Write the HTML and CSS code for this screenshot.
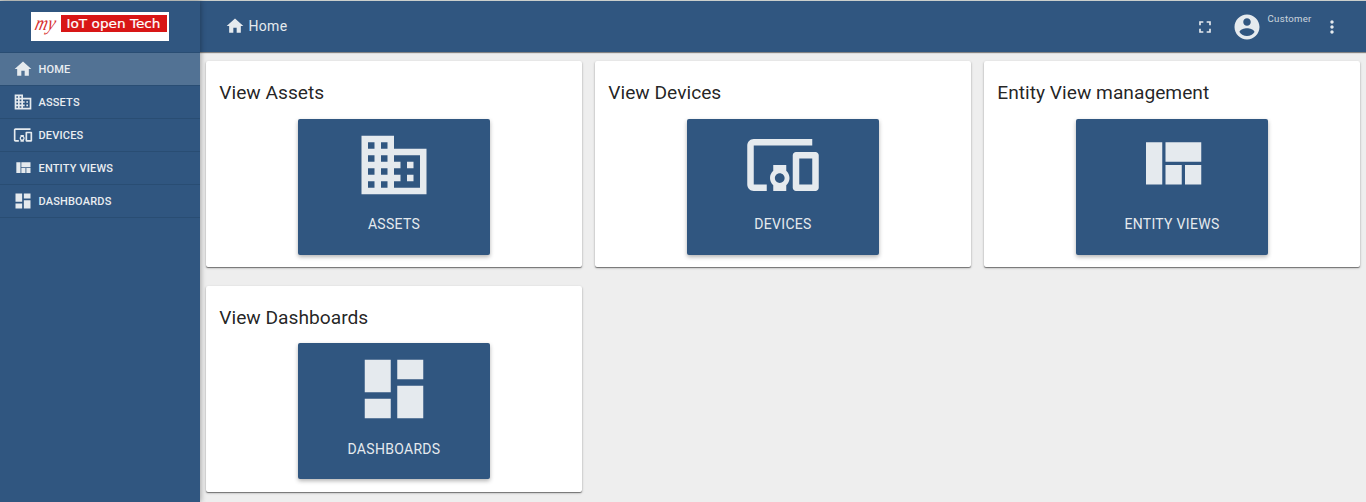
FILE: index.html
```html
<!DOCTYPE html>
<html lang="en">
<head>
<meta charset="utf-8">
<title>Home</title>
<link rel="stylesheet" href="styles.css">
</head>
<body>
<svg class="defs" aria-hidden="true">
  <symbol id="home" viewBox="0 0 24 24"><path d="M10 20v-6h4v6h5v-8h3L12 3 2 12h3v8z"/></symbol>
  <symbol id="assets" viewBox="0 0 24 24"><path d="M12 7V3H2v18h20V7H12zM6 19H4v-2h2v2zm0-4H4v-2h2v2zm0-4H4V9h2v2zm0-4H4V5h2v2zm4 12H8v-2h2v2zm0-4H8v-2h2v2zm0-4H8V9h2v2zm0-4H8V5h2v2zm10 12h-8v-2h2v-2h-2v-2h2v-2h-2V9h8v10zm-2-8h-2v2h2v-2zm0 4h-2v2h2v-2z"/></symbol>
  <symbol id="devices" viewBox="0 0 24 24"><path d="M3 6h18V4H3c-1.1 0-2 .9-2 2v12c0 1.1.9 2 2 2h4v-2H3V6zm10 6H9v1.78c-.61.55-1 1.33-1 2.22s.39 1.67 1 2.22V20h4v-1.78c.61-.55 1-1.34 1-2.22s-.39-1.67-1-2.22V12zm-2 5.5c-.83 0-1.5-.67-1.5-1.5s.67-1.5 1.5-1.5 1.5.67 1.5 1.5-.67 1.5-1.5 1.5zM22 8h-6c-.5 0-1 .5-1 1v10c0 .5.5 1 1 1h6c.5 0 1-.5 1-1V9c0-.5-.5-1-1-1zm-1 10h-4v-8h4v8z"/></symbol>
  <symbol id="views" viewBox="0 0 24 24"><path d="M10 18h5v-6h-5v6zm-6 0h5V5H4v13zm12 0h5v-6h-5v6zM10 5v6h11V5H10z"/></symbol>
  <symbol id="dashboards" viewBox="0 0 24 24"><path d="M3 13h8V3H3v10zm0 8h8v-6H3v6zm10 0h8V11h-8v10zm0-18v6h8V3h-8z"/></symbol>
  <symbol id="fullscreen" viewBox="0 0 24 24"><path d="M7 14H5v5h5v-2H7v-3zm-2-4h2V7h3V5H5v5zm12 7h-3v2h5v-5h-2v3zM14 5v2h3v3h2V5h-5z"/></symbol>
  <symbol id="account" viewBox="0 0 24 24"><path d="M12 2C6.48 2 2 6.48 2 12s4.480 10 10 10 10-4.480 10-10S17.520 2 12 2zm0 3c1.660 0 3 1.340 3 3s-1.340 3-3 3-3-1.340-3-3 1.340-3 3-3zm0 14.200c-2.500 0-4.710-1.280-6-3.220.03-1.990 4-3.080 6-3.080 1.990 0 5.970 1.090 6 3.080-1.290 1.940-3.500 3.220-6 3.220z"/></symbol>
  <symbol id="more" viewBox="0 0 24 24"><path d="M12 8c1.100 0 2-.9 2-2s-.9-2-2-2-2 .9-2 2 .9 2 2 2zm0 2c-1.100 0-2 .9-2 2s.9 2 2 2 2-.9 2-2-.9-2-2-2zm0 6c-1.100 0-2 .9-2 2s.9 2 2 2 2-.9 2-2-.9-2-2-2z"/></symbol>
</svg>
<div class="app">
  <aside class="sidebar">
    <div class="brand">
      <svg class="logo" viewBox="0 0 138 29">
        <rect width="138" height="29" fill="#fff"/>
        <rect x="30" y="3" width="106" height="17" fill="#d81616"/>
        <text class="logo-my" transform="translate(3 18) skewX(-14) scale(1 1.15)" textLength="20" lengthAdjust="spacingAndGlyphs">my</text>
        <text class="logo-name" x="35.500" y="15.500" textLength="94" lengthAdjust="spacingAndGlyphs">IoT open Tech</text>
      </svg>
    </div>
    <nav class="menu">
      <a class="item active"><svg class="icon"><use href="#home"/></svg>Home</a>
      <a class="item"><svg class="icon"><use href="#assets"/></svg>Assets</a>
      <a class="item"><svg class="icon"><use href="#devices"/></svg>Devices</a>
      <a class="item"><svg class="icon"><use href="#views"/></svg>Entity views</a>
      <a class="item"><svg class="icon"><use href="#dashboards"/></svg>Dashboards</a>
    </nav>
  </aside>
  <div class="page">
    <header class="toolbar">
      <div class="crumb"><svg class="icon"><use href="#home"/></svg>Home</div>
      <svg class="icon expand"><use href="#fullscreen"/></svg>
      <svg class="avatar"><use href="#account"/></svg>
      <span class="role">Customer</span>
      <svg class="icon more"><use href="#more"/></svg>
    </header>
    <main class="cards">
      <section class="card"><h2>View Assets</h2><a class="tile"><svg><use href="#assets"/></svg><span>Assets</span></a></section>
      <section class="card"><h2>View Devices</h2><a class="tile"><svg><use href="#devices"/></svg><span>Devices</span></a></section>
      <section class="card"><h2>Entity View management</h2><a class="tile"><svg><use href="#views"/></svg><span>Entity views</span></a></section>
      <section class="card"><h2>View Dashboards</h2><a class="tile"><svg><use href="#dashboards"/></svg><span>Dashboards</span></a></section>
    </main>
  </div>
</div>
</body>
</html>
```
FILE: styles.css
```css
* { box-sizing: border-box; }
body { margin: 0; font-family: Roboto, sans-serif; color: rgba(0, 0, 0, .87); background: #eee; overflow: hidden; }
svg { display: block; flex: none; fill: #e5eaee; }
.defs { display: none; }
.app { display: flex; height: 502px; border-top: 1px solid #cbcfcc; }
.sidebar { width: 200px; flex: none; background: #305680; box-shadow: 1px 0 5px rgba(0, 0, 0, .3); z-index: 2; }
.brand { height: 52px; padding: 11px 0 0 31px; border-bottom: 1px solid #294d73; }
.logo { width: 138px; height: 29px; overflow: visible; }
.logo-my { font: italic 18px "Liberation Serif", serif; fill: #d8302f; }
.logo-name { font: 500 12.500px "DejaVu Sans", sans-serif; fill: #fff; stroke: #fff; stroke-width: .2px; }
.item { display: flex; align-items: center; gap: 6px; height: 33px; padding-left: 12.500px; border-bottom: 1px solid #294d73; color: #e9edf1; font-size: 11px; font-weight: 500; letter-spacing: .17px; text-transform: uppercase; }
.item.active { background: #527294; }
.icon { width: 20px; height: 20px; }
.page { flex: 1; min-width: 0; }
.toolbar { display: flex; align-items: center; height: 51px; padding: 0 24px 0 25px; background: #305680; box-shadow: 0 1px 1px rgba(0, 0, 0, .45); color: #e5eaee; }
.crumb { display: flex; align-items: center; gap: 3.500px; flex: 1; margin-top: -1px; font-size: 14px; letter-spacing: .3px; }
.expand { margin-right: 16.500px; }
.avatar { width: 30px; height: 30px; margin: 0 6px 0 0; }
.role { align-self: flex-start; width: 54.500px; padding-top: 12px; font-size: 9.600px; line-height: 12px; letter-spacing: .3px; opacity: .85; }
.cards { display: grid; grid-template-columns: repeat(3, 376px); grid-auto-rows: 206px; gap: 18.700px 13px; padding: 9px 6px; }
.card { display: flex; flex-direction: column; align-items: center; background: #fff; border-radius: 2px; box-shadow: 0 1px 1px rgba(0, 0, 0, .45), 0 1px 3px rgba(0, 0, 0, .2); }
h2 { align-self: stretch; margin: 0; padding: 19px 13.300px 12.700px; font-size: 19.200px; font-weight: 400; line-height: 26px; letter-spacing: 0; }
.tile { display: flex; flex-direction: column; align-items: center; width: 192px; height: 136px; padding-top: 7.100px; background: #305680; border-radius: 2px; box-shadow: 0 2px 4px rgba(0, 0, 0, .3); color: #e5eaee; }
.tile svg { width: 78px; height: 78px; }
.tile span { margin-top: 10.300px; font-size: 14px; line-height: 20px; letter-spacing: .3px; text-transform: uppercase; }
```
